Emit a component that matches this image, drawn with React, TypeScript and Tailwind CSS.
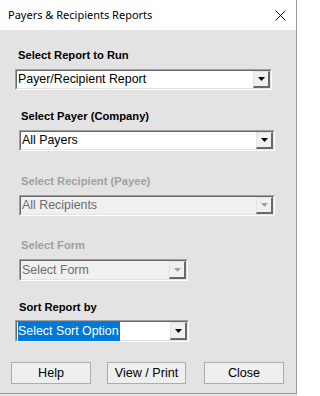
import React from "react";

const font = { fontFamily: '"Liberation Sans", Arial, sans-serif' };

function Arrow({ disabled }: { disabled?: boolean }) {
  return (
    <svg width="7" height="4" viewBox="0 0 7 4" className="block">
      <polygon points="0,0 7,0 3.5,4" fill={disabled ? "#a0a0a0" : "#000000"} />
    </svg>
  );
}

function Combo({
  text,
  disabled,
  selected,
  className,
}: {
  text: string;
  disabled?: boolean;
  selected?: boolean;
  className: string;
}) {
  return (
    <div className={`border-t border-l border-t-[#a0a0a0] border-l-[#a0a0a0] border-b border-r border-b-white border-r-white ${className}`}>
      <div
        className={`flex h-full border-t border-l border-t-[#696969] border-l-[#696969] border-b border-r border-b-[#e3e3e3] border-r-[#e3e3e3] ${
          disabled ? "bg-[#f0f0f0]" : "bg-white"
        }`}
      >
        <div className="flex min-w-0 flex-1 items-center pl-[1px]">
          <span
            className={`whitespace-nowrap text-[12.4px] leading-[19px] ${
              selected ? "bg-[#0078d7] pr-[1px] text-white" : disabled ? "text-[#6d6d6d]" : "text-black"
            }`}
          >
            {text}
          </span>
        </div>
        <div className="flex w-[17px] items-center justify-center border-t border-l border-t-[#e3e3e3] border-l-[#e3e3e3] border-b-2 border-r-2 border-b-[#696969] border-r-[#696969] bg-[#f0f0f0]">
          <Arrow disabled={disabled} />
        </div>
      </div>
    </div>
  );
}

function Label({ text, disabled, className }: { text: string; disabled?: boolean; className: string }) {
  return (
    <div
      className={`text-[11.2px] font-bold leading-[14px] whitespace-nowrap ${
        disabled ? "text-[#a0a0a0]" : "text-black"
      } ${className}`}
    >
      {text}
    </div>
  );
}

function Btn({ text, className }: { text: string; className: string }) {
  return (
    <div
      className={`flex h-[22px] items-center justify-center border border-[#adadad] bg-[#efefef] text-[12.6px] text-black ${className}`}
    >
      {text}
    </div>
  );
}

export default function App() {
  return (
    <div className="h-[396px] w-[297px] bg-[#e3e3e3]" style={font}>
      <div className="flex h-[394px] w-[297px] flex-col border-r border-b border-[#9a9a9a]">
        <div className="flex h-[30px] shrink-0 items-center justify-between bg-white pl-[8px] pr-[10px]">
          <span
            className="text-[11px] text-black whitespace-nowrap"
            style={{ fontFamily: '"Noto Sans", "Open Sans", sans-serif' }}
          >
            Payers &amp; Recipients Reports
          </span>
          <svg width="11" height="11" viewBox="0 0 11 11" className="block">
            <path d="M0.5 0.5 L10.5 10.5 M10.5 0.5 L0.5 10.5" stroke="#111" strokeWidth="1" />
          </svg>
        </div>
        <div className="flex flex-col">
          <Label text="Select Report to Run" className="mt-[18px] ml-[18px]" />
          <Combo text="Payer/Recipient Report" className="mt-[7px] ml-[15px] h-[21px] w-[257px]" />

          <Label text="Select Payer (Company)" className="mt-[19px] ml-[21px]" />
          <Combo text="All Payers" className="mt-[7px] ml-[19px] h-[21px] w-[256px]" />

          <Label text="Select Recipient (Payee)" disabled className="mt-[23px] ml-[21px]" />
          <Combo text="All Recipients" disabled className="mt-[7px] ml-[19px] h-[21px] w-[256px]" />

          <Label text="Select Form" disabled className="mt-[22px] ml-[21px]" />
          <Combo text="Select Form" disabled className="mt-[7px] ml-[19px] h-[22px] w-[169px]" />

          <Label text="Sort Report by" className="mt-[19px] ml-[19px]" />
          <Combo text="Select Sort Option" selected className="mt-[6px] ml-[15px] h-[22px] w-[174px]" />

          <div className="mt-[20px] flex pl-[11px]">
            <Btn text="Help" className="w-[80px]" />
            <Btn text="View / Print" className="ml-[16px] w-[79px]" />
            <Btn text="Close" className="ml-[18px] w-[80px]" />
          </div>
        </div>
      </div>
    </div>
  );
}
